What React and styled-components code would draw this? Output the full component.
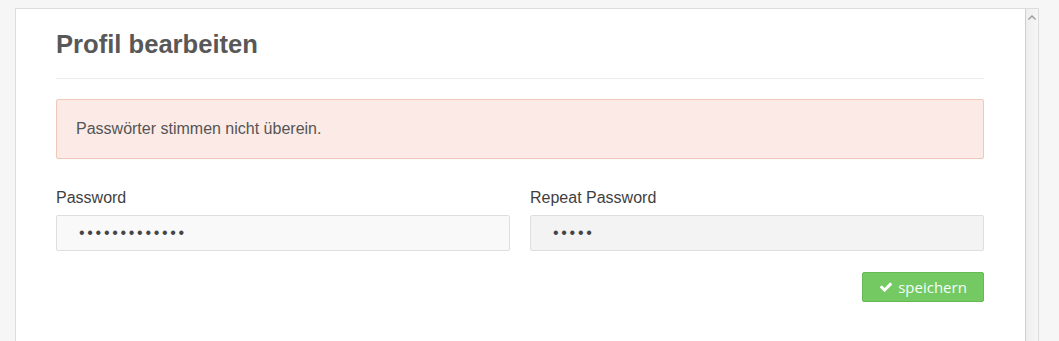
import React from 'react';
import styled, { createGlobalStyle } from 'styled-components';

const GlobalStyle = createGlobalStyle`
  html, body {
    margin: 0;
    padding: 0;
    background: #f6f6f6;
    overflow: hidden;
  }
  body {
    font-family: "Liberation Sans", Arial, sans-serif;
    font-size: 16px;
    color: #333;
  }
`;

const Page = styled.div`
  padding: 8px 20px 0 15px;
`;

const Panel = styled.div`
  display: flex;
  background: #fff;
  border: 1px solid #ddd;
  border-bottom: none;
  min-height: 340px;
`;

const Content = styled.div`
  flex: 1;
  padding: 21px 41px 40px 40px;
`;

const Scrollbar = styled.div`
  width: 13px;
  border-left: 1px solid #cfcfcf;
  background: linear-gradient(to right, #eeeeee, #f6f6f6);
  display: flex;
  justify-content: center;
  padding-top: 6px;
  box-sizing: border-box;
`;

const Title = styled.h1`
  margin: 0;
  font-size: 25.6px;
  line-height: 28px;
  font-weight: bold;
  color: #585858;
`;

const Divider = styled.hr`
  margin: 20px 0;
  border: none;
  border-top: 1px solid #ececec;
`;

const Alert = styled.div`
  background: #fbeae5;
  border: 1px solid #f0c9bb;
  border-radius: 2px;
  padding: 19px 19px;
  line-height: 20px;
  color: #555;
  margin-bottom: 29px;
`;

const Row = styled.div`
  display: grid;
  grid-template-columns: 1fr 1fr;
  column-gap: 20px;
`;

const Field = styled.div`
  display: flex;
  flex-direction: column;
`;

const Label = styled.label`
  line-height: 20px;
  color: #3f3f3f;
  margin-bottom: 7px;
`;

const Input = styled.input`
  box-sizing: border-box;
  height: 36px;
  border: 1px solid #dedede;
  border-radius: 2px;
  background: ${(props) => (props.$muted ? '#f3f3f3' : '#f9f9f9')};
  padding: 0 20px 0 22px;
  font-family: "Liberation Sans", Arial, sans-serif;
  font-size: 16px;
  letter-spacing: 2.7px;
  color: #444;
  outline: none;
`;

const Actions = styled.div`
  display: flex;
  justify-content: flex-end;
  margin-top: 21px;
`;

const SaveButton = styled.button`
  display: flex;
  align-items: center;
  justify-content: center;
  gap: 5px;
  height: 30px;
  width: 122px;
  padding: 0 14px;
  box-sizing: border-box;
  background: #74c962;
  border: 1px solid #66b954;
  border-radius: 2px;
  color: #f4fffb;
  font-family: "Open Sans", "Noto Sans", sans-serif;
  font-size: 15px;
  cursor: pointer;
`;

const CheckIcon = () => (
  <svg width="14" height="14" viewBox="0 0 1792 1792" fill="#fff">
    <path d="M1671 566q0 40-28 68l-724 724-136 136q-28 28-68 28t-68-28l-136-136-362-362q-28-28-28-68t28-68l136-136q28-28 68-28t68 28l294 295 656-657q28-28 68-28t68 28l136 136q28 28 28 68z" />
  </svg>
);

const UpArrow = () => (
  <svg width="8" height="5" viewBox="0 0 8 5">
    <path d="M0.5 4.5 L4 1 L7.5 4.5" fill="none" stroke="#9a9a9a" strokeWidth="1.3" />
  </svg>
);

const App = () => {
  return (
    <Page>
      <GlobalStyle />
      <Panel>
        <Content>
          <Title>Profil bearbeiten</Title>
          <Divider />
          <Alert>Passwörter stimmen nicht überein.</Alert>
          <Row>
            <Field>
              <Label>Password</Label>
              <Input type="password" defaultValue="geheim1234567" readOnly />
            </Field>
            <Field>
              <Label>Repeat Password</Label>
              <Input type="password" defaultValue="abcde" $muted readOnly />
            </Field>
          </Row>
          <Actions>
            <SaveButton>
              <CheckIcon />
              speichern
            </SaveButton>
          </Actions>
        </Content>
        <Scrollbar>
          <UpArrow />
        </Scrollbar>
      </Panel>
    </Page>
  );
};

export default App;
